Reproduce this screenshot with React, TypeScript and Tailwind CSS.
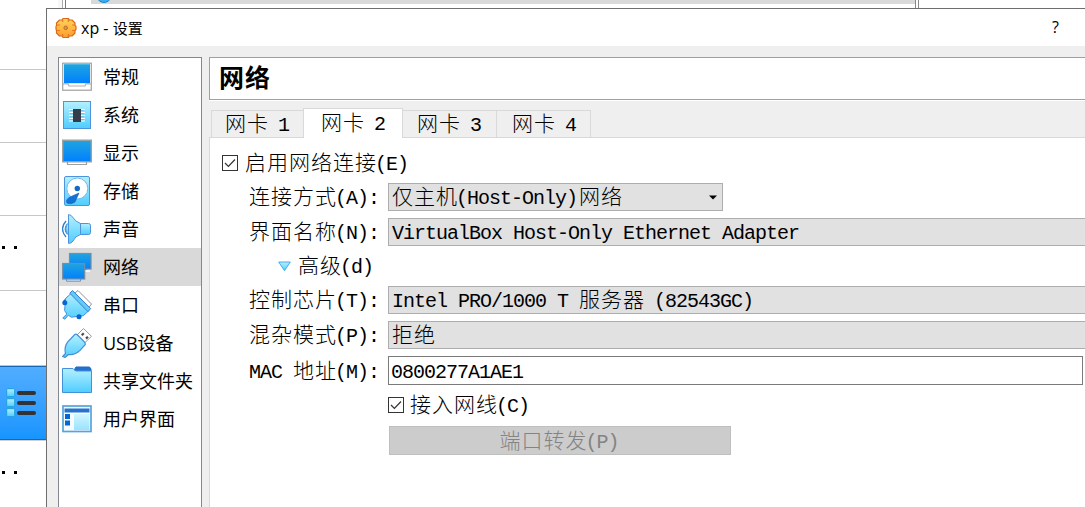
import React from "react";

const CJK_RUN = /([\u2e80-\u9fff]+)/;

/* Full-width glyphs take 22px, half-width ones 11px. */
function Song({ children }: { children: string }) {
  return (
    <span className="flex whitespace-pre pt-[4px]">
      {children.split(CJK_RUN).map((run, i) =>
        run === "" ? null : CJK_RUN.test(run) ? (
          <span key={i} className="text-[21px] font-light tracking-[1px]">{run}</span>
        ) : (
          <span key={i} className={"text-[20px] tracking-[-1px] " + (i > 0 ? "-ml-[2px] mr-[2px]" : "")}>{run}</span>
        )
      )}
    </span>
  );
}

function Defs() {
  return (
    <svg className="absolute h-0 w-0">
      <defs>
        <linearGradient id="screen" x1="0" y1="0" x2="0" y2="1">
          <stop offset="0" stopColor="#1fa5df" />
          <stop offset="1" stopColor="#0080ff" />
        </linearGradient>
        <linearGradient id="ice" x1="0" y1="0" x2="0" y2="1">
          <stop offset="0" stopColor="#b4f0ff" />
          <stop offset="1" stopColor="#4fcdff" />
        </linearGradient>
        <linearGradient id="gear" x1="0" y1="0" x2="0" y2="1">
          <stop offset="0" stopColor="#ffd45a" />
          <stop offset="1" stopColor="#ff9d2c" />
        </linearGradient>
      </defs>
    </svg>
  );
}

const icons: Record<string, React.ReactNode> = {
  general: (
    <>
      <rect x="0.7" y="1.2" width="28.6" height="27" fill="#fff" stroke="#a0a0a0" strokeWidth="1.2" />
      <rect x="2" y="2.2" width="26" height="19" fill="url(#screen)" />
      <path d="M1 21.8h5l1 2.2h16l1-2.2h5" fill="none" stroke="#b0b0b0" strokeWidth="1.2" />
    </>
  ),
  system: (
    <>
      <rect x="1.5" y="1.5" width="27" height="27" fill="url(#ice)" stroke="#4d94dc" />
      <path d="M7 9.5h16M7 12.5h16M7 15.5h16M7 18.5h16M7 21h16" stroke="#fff" />
      <path d="M8 10.5h14M8 13.5h14M8 16.5h14M8 19.5h14" stroke="#6fb6d5" strokeWidth="0.7" />
      <rect x="11" y="9" width="8" height="13" fill="#343b49" />
    </>
  ),
  display: (
    <>
      <path d="M5.5 23v3.500h19V23" fill="#fff" stroke="#a0a0a0" strokeWidth="1.2" />
      <rect x="0.7" y="2.2" width="28.6" height="21.6" fill="url(#screen)" stroke="#a0a0a0" strokeWidth="1.4" />
    </>
  ),
  storage: (
    <>
      <rect x="2.5" y="0.5" width="25" height="29" rx="1.5" fill="url(#ice)" stroke="#4d94dc" />
      <circle cx="15.3" cy="12.5" r="10.5" fill="#fff" stroke="#70bce8" />
      <circle cx="15.3" cy="12.5" r="2.7" fill="#1668c5" />
      <path d="M17 17l-9 4q-5 3-3 6 4 2 8-1Z" fill="#1471d6" stroke="#105dba" strokeWidth="0.6" />
    </>
  ),
  audio: (
    <>
      <path d="M4 7Q-3 15 4 23M5.5 10Q1 15 5.5 20" fill="none" stroke="#347fc9" strokeWidth="1.3" />
      <path d="M7 10H5Q2.5 15 5 20H7" fill="url(#ice)" stroke="#4aa4df" />
      <path d="M18 9.5h8.5q2 0 2 2v7q0 2-2 2H18" fill="url(#ice)" stroke="#4d94dc" />
      <path d="M6.5.6Q9 .6 10.5 3 13 7.5 18.5 9.5v11Q13 22 11 27 9.5 29.5 6.5 29.4Z" fill="url(#ice)" stroke="#4d94dc" />
    </>
  ),
  network: (
    <>
      <path d="M22 17v2h6" stroke="#eef6ff" strokeWidth="2" />
      <rect x="7.5" y="1.5" width="21.5" height="15.5" fill="url(#screen)" stroke="#748da5" strokeWidth="1.2" />
      <path d="M4.5 27v2.2h14V27" fill="#c9e7ff" stroke="#7893ab" />
      <rect x="0.7" y="11.5" width="22" height="15.5" fill="url(#screen)" stroke="#748da5" strokeWidth="1.2" />
    </>
  ),
  serial: (
    <>
      <path d="M13 3l3-2.5L29.5 14l-3 4Z" fill="#fff" stroke="#929292" />
      <path d="M2.5 11.5L7 7M17.5 26l5-4.5" stroke="#1971d6" strokeWidth="3" />
      <path d="M0.8 28l4-4-2.2-3.5 1-12L9.5 3 27 20.5l-5.7 5.2-12 1.5-3-2-3.5 4Z" fill="url(#ice)" stroke="#3f92d9" />
      <path d="M7.8 3.2L10.5.6l18.2 18-2.8 3Z" fill="#64caf8" stroke="#347fce" />
      <circle cx="2.8" cy="12.7" r="2.5" fill="#0866d2" />
      <circle cx="17" cy="26.7" r="2.5" fill="#0866d2" />
    </>
  ),
  usb: (
    <>
      <path d="M15 7l6.500-6.500L29.500 8.300 22 15.500Z" fill="#fff" stroke="#9b9b9b" />
      <path d="M19 6.500l2-2 1.500 1.500-2 2ZM23.300 9.800l1.800-1.800 1.600 1.500-2 2Z" fill="#484848" />
      <path d="M.7 28.500l2.800-3q-2-8.500 5-14.500l4.500-4.700q1.500-.5 4 2.200l4.500 4.500q2.500 2.200 1.500 4l-5 5.300q-5 5-11.500 4.200l-3.500 3Z" fill="url(#ice)" stroke="#438fd4" strokeWidth="1.200" />
    </>
  ),
  folder: (
    <>
      <path d="M11 6L14 1h13.500L29 3v3Z" fill="#2370d1" stroke="#1e67c5" />
      <path d="M.5 2.500h10.500l2.500 2.500h16v21.500H.5Z" fill="url(#ice)" stroke="#4292d9" />
    </>
  ),
  ui: (
    <>
      <rect x="1" y="2" width="28" height="25.5" fill="#f5fcff" stroke="#55a4dc" strokeWidth="1.7" />
      <rect x="2.5" y="4.5" width="25" height="4" fill="#2872cc" />
      <rect x="3" y="10" width="5" height="5" fill="#0866d2" />
      <rect x="3" y="16.5" width="5" height="5" fill="#0866d2" />
      <rect x="12" y="10" width="15.5" height="16" fill="url(#ice)" opacity=".55" />
    </>
  ),
};

const menu = [
  ["general", "常规"],
  ["system", "系统"],
  ["display", "显示"],
  ["storage", "存储"],
  ["audio", "声音"],
  ["network", "网络"],
  ["serial", "串口"],
  ["usb", "USB设备"],
  ["folder", "共享文件夹"],
  ["ui", "用户界面"],
];

function Check() {
  return (
    <svg width="16" height="16" viewBox="0 0 16 16" className="shrink-0">
      <rect x="0.5" y="0.5" width="15" height="15" fill="#fff" stroke="#333" />
      <path d="M3 8l3.4 3.5L13 4.5" fill="none" stroke="#333" strokeWidth="1.2" />
    </svg>
  );
}

function Row({ label, children, className }: { label: string; children: React.ReactNode; className: string }) {
  return (
    <div className={"flex items-center " + className}>
      <div className="w-[139px] shrink-0"><Song>{label}</Song></div>
      {children}
    </div>
  );
}

function WideSelect({ children }: { children: string }) {
  return (
    <div className="flex h-full flex-1 items-center border-y border-l border-[#adadad] bg-[#e1e1e1] pl-[3px]">
      <Song>{children}</Song>
    </div>
  );
}

function LeftStrip() {
  return (
    <div className="flex w-[46px] shrink-0 flex-col bg-white">
      <div className="h-[62px] border-b border-[#c8c8c8]" />
      <div className="h-[73px] border-b border-[#c8c8c8]" />
      <div className="h-[73px] border-b border-[#c8c8c8]" />
      <div className="flex h-[75px] items-start gap-[9px] border-b border-[#c8c8c8] pl-[2px] pt-[30px]">
        <span className="h-[3px] w-[3px] bg-black" />
        <span className="h-[3px] w-[3px] bg-black" />
      </div>
      <div className="h-[75px] border-b border-[#b8c4d0]" />
      <div className="flex h-[74px] items-center border-y border-[#1767b4] bg-linear-to-b from-[#50adff] to-[#1595ff] pl-[6px]">
        <svg width="31" height="30" viewBox="0 0 31 30">
          {[1, 11, 21].map((y) => (
            <g key={y}>
              <rect x="0.7" y={y - 0.3} width="8" height="8" rx="1" fill="url(#ice)" stroke="#209edb" />
              <path d={`M13 ${y + 4}H28`} stroke="#333" strokeWidth="4" strokeLinecap="round" />
            </g>
          ))}
        </svg>
      </div>
      <div className="flex flex-1 items-start gap-[9px] border-t border-[#d0d0d0] pl-[2px] pt-[30px]">
        <span className="h-[3px] w-[3px] bg-black" />
        <span className="h-[3px] w-[3px] bg-black" />
      </div>
    </div>
  );
}

export default function App() {
  return (
    <div className="flex h-[507px] w-[1085px] flex-col overflow-hidden bg-white text-black">
      <Defs />
      <div className="flex h-[8px] shrink-0">
        <div className="w-[58px]" />
        <div className="w-[5px] border-r border-[#aaa] bg-[#f7f7f7]" />
        <div className="w-[3px] border-r border-[#777]" />
        <div className="w-[25px]" />
        <div className="h-[4px] w-[824px] bg-[#d9d9d9]">
          <svg width="30" height="4" viewBox="0 0 30 4">
            <circle cx="13" cy="-5" r="7.5" fill="#38aef0" stroke="#1686ce" />
          </svg>
        </div>
        <div className="w-[4px] border-x border-[#888]" />
      </div>
      <div className="flex min-h-0 flex-1">
        <LeftStrip />
        <div className="flex min-w-0 flex-1 flex-col border-l border-t border-[#6e6e6e] bg-[#efefef] font-['Open_Sans','Noto_Sans_CJK_SC',sans-serif]">
          <div className="flex h-[37px] shrink-0 items-center bg-white pl-[8px]">
            <svg width="22" height="22" viewBox="0 0 22 22">
              <path
                d="M8 1.500h5.500l1 1.500h2.500l3 3v2.500l1 1v3l-1 1V16l-3 3h-2.500l-1 1.500H8L7 19H4.500l-3-3v-2.500L1 12V9.500l.5-1V6l3-3H7Z"
                fill="url(#gear)"
                stroke="#dc6919"
                strokeWidth="1.2"
                strokeLinejoin="round"
              />
              <path
                d="M7.700 2v3M13.300 2v3M7.700 17v3M13.300 17v3M2 8h3M2 13.500h3M17 8h3M17 13.500h3"
                stroke="#e57722"
                strokeWidth="1.2"
              />
              <circle cx="10.700" cy="10.800" r="1.800" fill="#e89536" stroke="#b96b29" />
            </svg>
            <span className="ml-[4px] flex-1 whitespace-pre text-[15px] leading-5">
              <span className="text-[16px]">xp - </span>设置
            </span>
            <span className="mr-[26px] pb-[2px] text-[16px] leading-5">?</span>
          </div>
          <div className="flex min-h-0 flex-1 pl-[11px] pt-[11px]">
            <div className="w-[144px] shrink-0 border-x border-t border-[#828790] bg-white">
              {menu.map(([key, label]) => (
                <div
                  key={key}
                  className={
                    "flex h-[38px] items-center gap-[11px] pl-[3px] " + (key === "network" ? "bg-[#d9d9d9]" : "")
                  }
                >
                  <svg width="30" height="30" viewBox="0 0 30 30" className="shrink-0">{icons[key]}</svg>
                  <span className="whitespace-nowrap text-[18px] leading-6">{label}</span>
                </div>
              ))}
            </div>
            <div className="ml-[7px] flex min-w-0 flex-1 flex-col font-['Liberation_Mono','Noto_Sans_CJK_SC',monospace] leading-7">
              <div className="flex h-[43px] shrink-0 items-center border-y border-l border-[#a0a0a0] bg-white pl-[9px] pt-[5px] text-[25px] font-bold tracking-[1px]">
                网络
              </div>
              <div className="h-px shrink-0 bg-white" />
              <div className="flex h-[37px] shrink-0 items-end border-b border-[#d9d9d9] pl-[2px]">
                <div className="flex h-[27px] w-[92px] items-center border-l border-t border-[#d9d9d9] pl-[13px]"><Song>网卡 1</Song></div>
                <div className="-mb-px flex h-[30px] w-[100px] items-center border-x border-t border-[#d9d9d9] bg-white pb-px pl-[17px]"><Song>网卡 2</Song></div>
                <div className="flex h-[27px] w-[93px] items-center border-t border-[#d9d9d9] pl-[14px]"><Song>网卡 3</Song></div>
                <div className="flex h-[27px] w-[95px] items-center border-x border-t border-[#d9d9d9] pl-[15px]"><Song>网卡 4</Song></div>
              </div>
              <div className="flex min-h-0 flex-1 flex-col border-l border-[#d9d9d9] bg-white pl-[39px]">
                <div className="-ml-[27px] mt-[11px] flex h-[28px] items-center gap-[7px]">
                  <Check />
                  <Song>启用网络连接(E)</Song>
                </div>
                <Row label="连接方式(A):" className="mt-[6px] h-[28px]">
                  <div className="flex h-full w-[335px] items-center justify-between border border-[#adadad] bg-[#e1e1e1] pl-[3px] pr-[5px]">
                    <Song>仅主机(Host-Only)网络</Song>
                    <svg width="8" height="5" viewBox="0 0 8 5"><path d="M0 .5h8L4 4.500Z" fill="#000" /></svg>
                  </div>
                </Row>
                <Row label="界面名称(N):" className="mt-[7px] h-[28px]">
                  <WideSelect>VirtualBox Host-Only Ethernet Adapter</WideSelect>
                </Row>
                <div className="ml-[29px] mt-[6px] flex h-[28px] items-center gap-[7px]">
                  <svg width="13" height="11" viewBox="0 0 13 11"><path d="M.7 1h11.600L6.500 9.700Z" fill="url(#ice)" stroke="#4aa8e8" /></svg>
                  <Song>高级(d)</Song>
                </div>
                <Row label="控制芯片(T):" className="mt-[6px] h-[28px]">
                  <WideSelect>Intel PRO/1000 T 服务器 (82543GC)</WideSelect>
                </Row>
                <Row label="混杂模式(P):" className="mt-[7px] h-[28px]">
                  <WideSelect>拒绝</WideSelect>
                </Row>
                <Row label="MAC 地址(M):" className="mt-[7px] h-[29px]">
                  <div className="mr-[2px] flex h-full flex-1 items-center border border-[#7a7a7a] bg-white pl-[2px]"><Song>0800277A1AE1</Song></div>
                </Row>
                <div className="ml-[139px] mt-[6px] flex h-[28px] items-center gap-[6px]">
                  <Check />
                  <Song>接入网线(C)</Song>
                </div>
                <div className="ml-[140px] mt-[7px] flex h-[29px] w-[342px] shrink-0 items-center justify-center border border-[#bfbfbf] bg-[#cccccc] text-[#838383]">
                  <Song>端口转发(P)</Song>
                </div>
              </div>
            </div>
          </div>
        </div>
      </div>
    </div>
  );
}
